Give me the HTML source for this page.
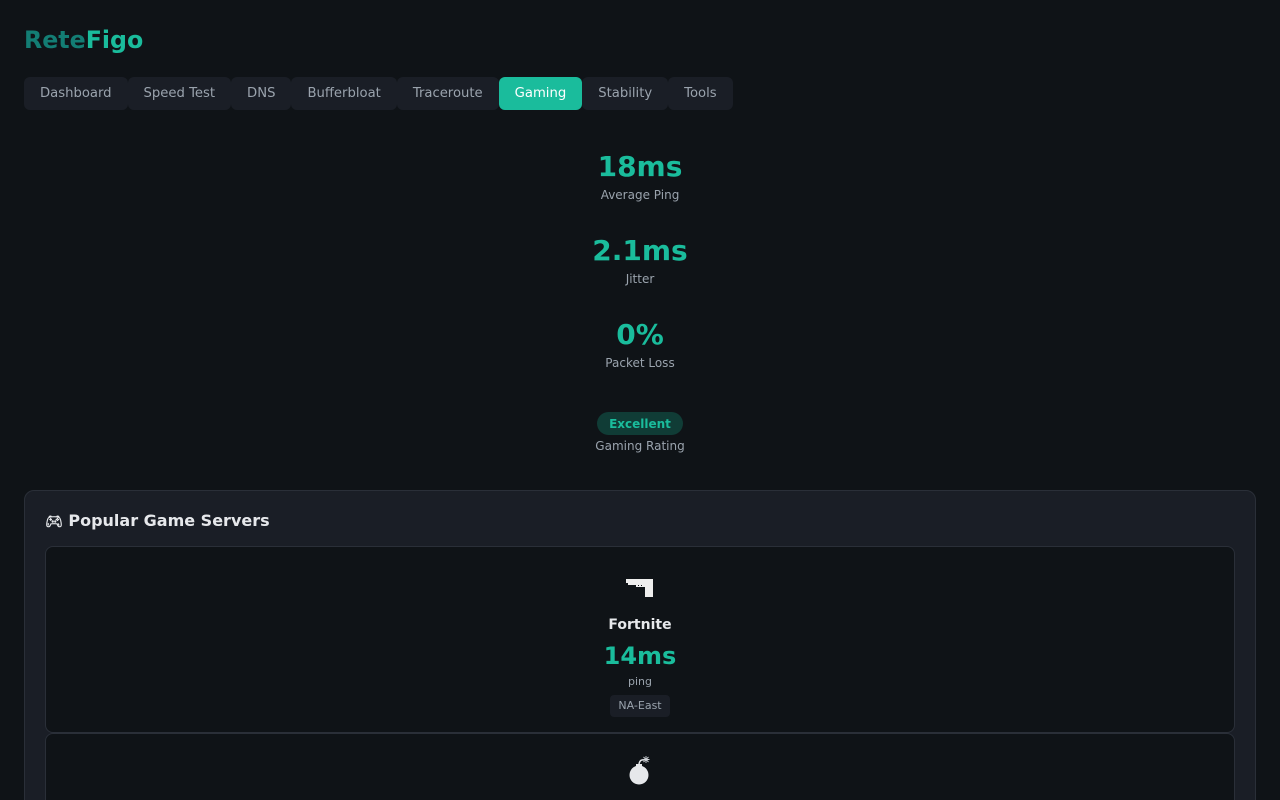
<!DOCTYPE html>
<html><head><meta charset="utf-8"><style>
*{box-sizing:border-box;margin:0;padding:0}
html,body{width:1280px;height:800px;overflow:hidden}
body{background:#0f1317;font-family:"DejaVu Sans","Liberation Sans",sans-serif;color:#e6e8eb;position:relative}
.logo{position:absolute;left:24px;top:26px;font-size:23.7px;font-weight:bold}
.logo .a{color:#137d74}.logo .b{color:#1abc9c}
nav{position:absolute;left:24px;top:77px;display:flex}
nav span{height:33px;line-height:34px;padding:0 16px;background:#1a1e26;color:#9aa3ad;font-size:13.2px;border-radius:6px;white-space:nowrap}
nav span.on{background:#1abc9c;color:#fff}
.stat{position:absolute;left:0;width:1280px;text-align:center}
.v{font-size:28px;font-weight:bold;color:#1abc9c;line-height:32px}
.l{font-size:12px;color:#9aa3ad;line-height:16px;margin-top:4px}
.badge{display:inline-block;background:#103c36;color:#1abc9c;font-size:12px;font-weight:bold;padding:0 12px;height:23px;line-height:24px;border-radius:12px}
.card{position:absolute;left:24px;top:490px;width:1232px;height:330px;background:#1a1e26;border:1px solid #2a2f38;border-radius:10px}
.title{position:absolute;left:20px;top:20px;font-size:16px;font-weight:bold;color:#e6e8eb;white-space:nowrap}
.srv{position:absolute;left:20px;width:1190px;background:#0f1317;border:1px solid #2a2f38;border-radius:8px;text-align:center}
.abs{position:absolute;left:0;width:100%;text-align:center}
.n{font-size:14px;font-weight:bold;line-height:18px}
.p{font-size:24px;font-weight:bold;color:#1abc9c;line-height:30px}
.pl{font-size:11px;color:#9aa3ad;line-height:14px}
.rg{display:inline-block;background:#1a1e26;color:#9aa3ad;font-size:11px;padding:0 8px;height:22px;line-height:22px;border-radius:4px}
</style></head><body>
<div class="logo"><span class="a">Rete</span><span class="b">Figo</span></div>
<nav><span>Dashboard</span><span>Speed Test</span><span>DNS</span><span>Bufferbloat</span><span>Traceroute</span><span class="on">Gaming</span><span>Stability</span><span>Tools</span></nav>
<div class="stat" style="top:151px"><div class="v">18ms</div><div class="l">Average Ping</div></div>
<div class="stat" style="top:235px"><div class="v">2.1ms</div><div class="l">Jitter</div></div>
<div class="stat" style="top:319px"><div class="v">0%</div><div class="l">Packet Loss</div></div>
<div class="stat" style="top:412px"><div class="badge">Excellent</div><div class="l" style="margin-top:3px">Gaming Rating</div></div>
<div class="card">
<div class="title"><span style="font-size:14px">&#x1F3AE;&#xFE0E;</span> Popular Game Servers</div>
<div class="srv" style="top:55px;height:187px">
<svg style="position:absolute;left:579px;top:31px" width="30" height="20" viewBox="0 0 30 20" fill="#eeeeee">
<rect x="1" y="1" width="27" height="4"/><rect x="3" y="5" width="25" height="2"/><rect x="11" y="7" width="17" height="2"/><rect x="20" y="9" width="8" height="10"/>
<rect x="13" y="7" width="1" height="1" fill="#0f1317"/><rect x="16" y="7" width="1" height="1" fill="#0f1317"/>
</svg>
<div class="abs n" style="top:69px">Fortnite</div>
<div class="abs p" style="top:94px">14ms</div>
<div class="abs pl" style="top:128px">ping</div>
<div class="abs" style="top:147px"><span class="rg">NA-East</span></div>
</div>
<div class="srv" style="top:242px;height:187px">
<svg style="position:absolute;left:581px;top:20px" width="26" height="34" viewBox="0 0 26 34">
<circle cx="12" cy="21" r="9.5" fill="#e6e8eb"/><rect x="9" y="10" width="6" height="4" fill="#e6e8eb"/>
<path d="M12 10 Q13 5 17 6" stroke="#e6e8eb" stroke-width="1.5" fill="none"/>
<path d="M19 2v7M15.5 5.5h7M16.5 3l5 5M21.5 3l-5 5" stroke="#cfd3d8" stroke-width="0.9"/>
</svg>
</div>
</div>
</body></html>
